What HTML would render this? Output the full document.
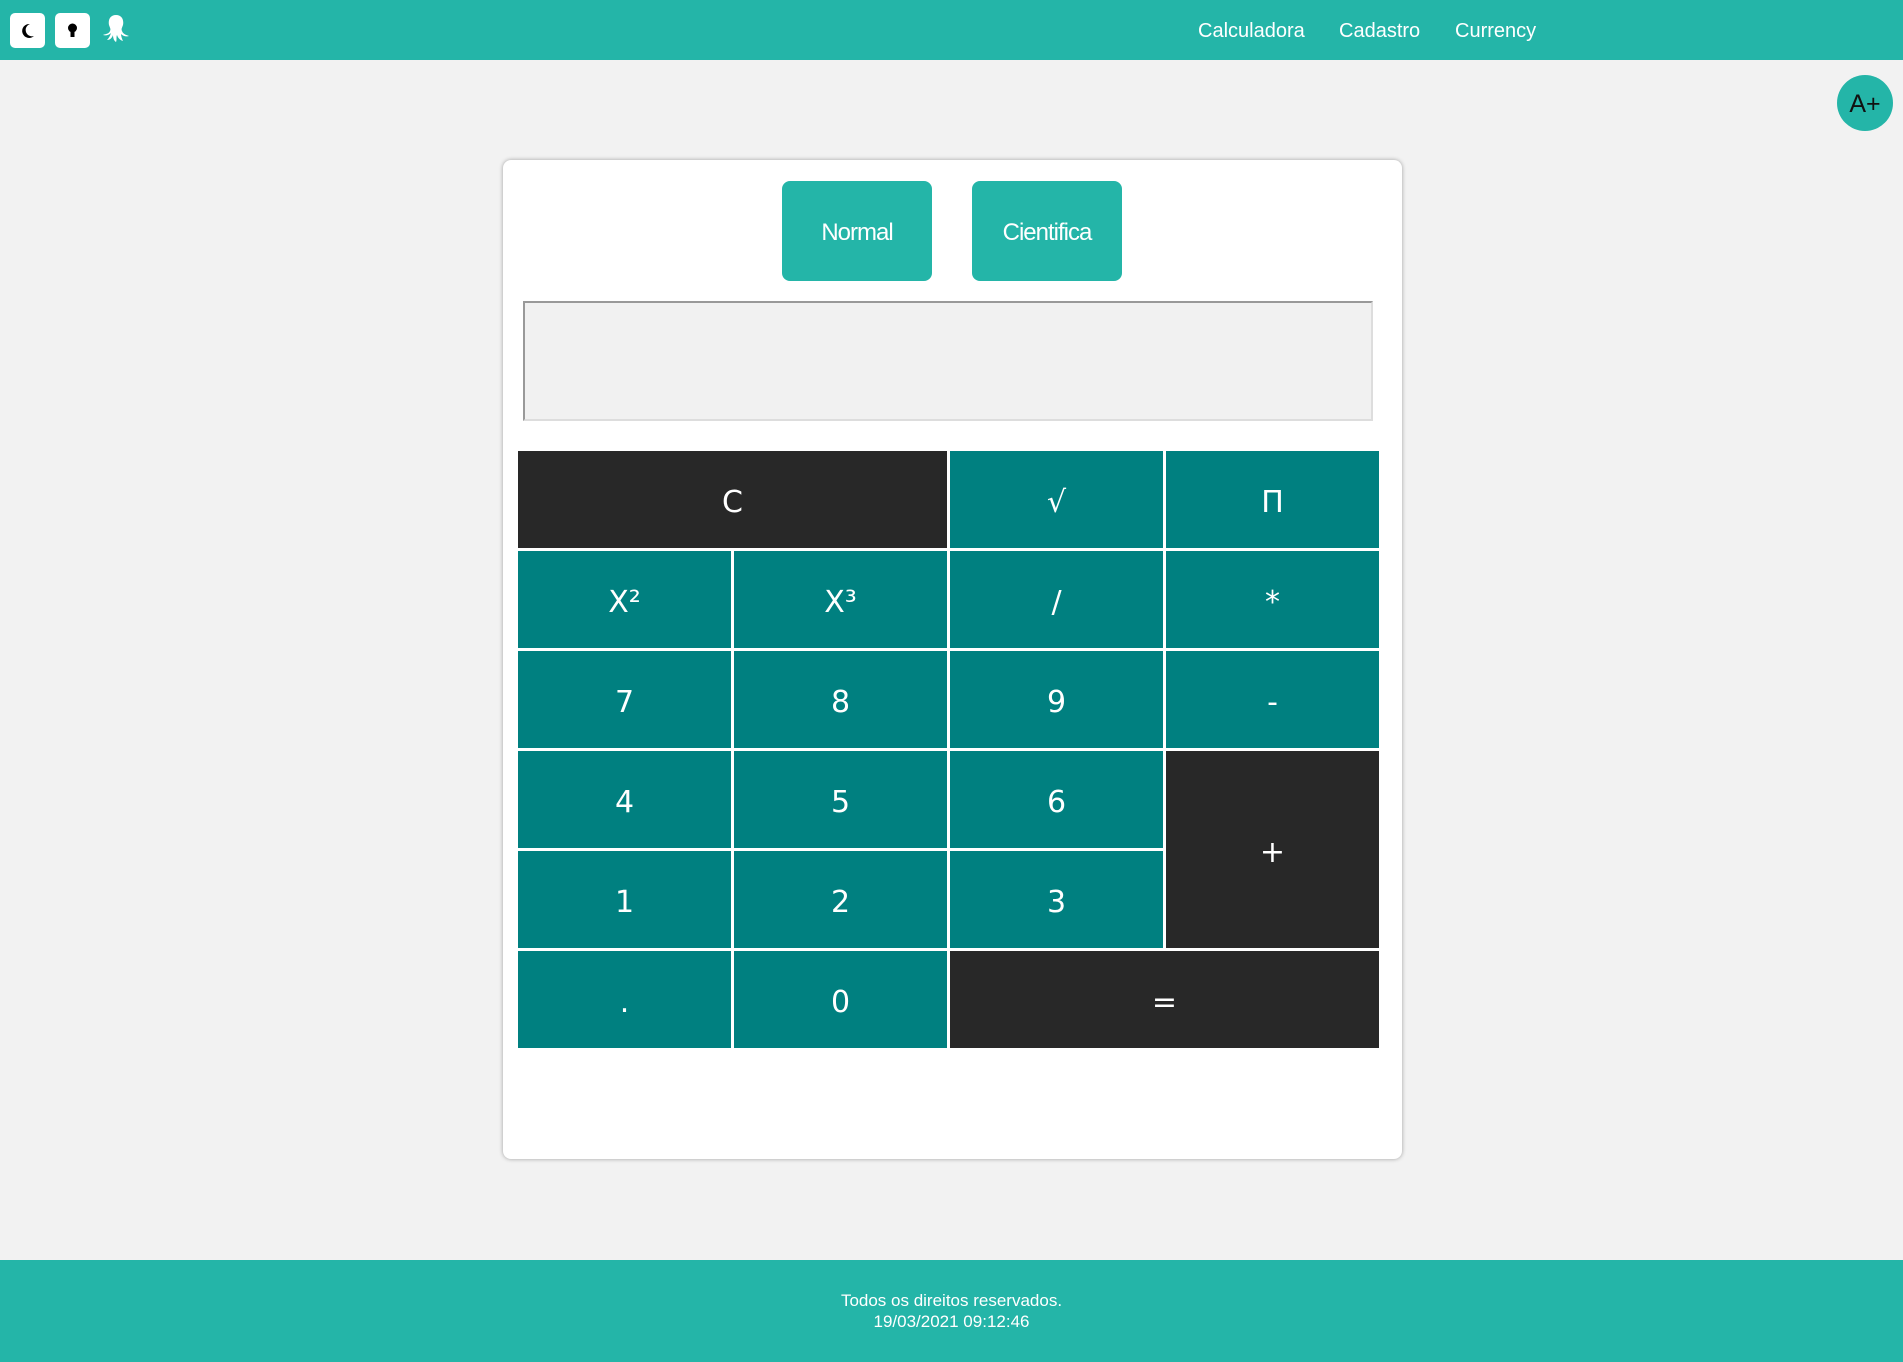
<!DOCTYPE html>
<html><head><meta charset="utf-8"><style>
*{box-sizing:border-box;margin:0;padding:0}
body{width:1903px;height:1362px;background:#f2f2f2;font-family:"Liberation Sans",sans-serif;position:relative;overflow:hidden}
.hdr{position:absolute;left:0;top:0;width:1903px;height:60px;background:#24b5a8}
.ib{position:absolute;top:13px;width:35px;height:35px;background:#fff;border-radius:5px}
.nav{position:absolute;top:20px;color:#fff;font-size:20px}
.ap{position:absolute;left:1837px;top:75px;width:56px;height:56px;border-radius:50%;background:#24b5a8;color:#111;font-size:25px;text-align:center;line-height:58px}
.card{position:absolute;left:503px;top:160px;width:899px;height:999px;background:#fff;border-radius:8px;box-shadow:0 0 4px rgba(0,0,0,.35)}
.tb{position:absolute;top:181px;width:150px;height:100px;background:#24b5a8;border-radius:8px;color:#fff;font-size:24px;text-align:center;line-height:103px;letter-spacing:-1px}
.disp{position:absolute;left:523px;top:301px;width:850px;height:120px;background:#f1f1f1;border:2px solid #999;border-right-color:#ddd;border-bottom-color:#ddd}
.k{position:absolute;width:213px;height:97px;background:#008080;color:#fff;font-family:"DejaVu Sans",sans-serif;font-size:30px;display:flex;align-items:center;justify-content:center;padding-top:5px}
.d{background:#282828}
.ft{position:absolute;left:0;top:1260px;width:1903px;height:102px;background:#24b5a8;color:#fff;text-align:center;font-size:17px;line-height:21px;padding-top:30px}
</style></head><body>
<div class="hdr">
<div class="ib" style="left:10px"><svg width="35" height="35"><path d="M20 11a7 7 0 1 0 4 12a6 6 0 0 1-4-12z" fill="#000"/></svg></div>
<div class="ib" style="left:55px"><svg width="35" height="35"><circle cx="17.5" cy="15" r="4.5" fill="#000"/><rect x="15.5" y="18" width="4" height="6" fill="#000"/></svg></div>
<svg style="position:absolute;left:100px;top:13px" width="32" height="32"><path d="M16 2c-6 0-8 5-7 10 1 3 2 4 1 6-1 3-5 3-7 4 3 1 6 0 8-2-1 3-2 5-4 7 3 0 5-2 6-5 0 3 1 6 3 7 1-2 0-5 1-7 1 3 3 5 6 6-1-2-2-5-2-7 2 2 5 3 8 2-3-1-6-2-7-5-1-2 0-3 1-6 1-5-1-10-7-10z" fill="#fff"/></svg>
<div class="nav" style="left:1198px">Calculadora</div>
<div class="nav" style="left:1339px">Cadastro</div>
<div class="nav" style="left:1455px">Currency</div>
</div>
<div class="ap">A+</div>
<div class="card"></div>
<div class="tb" style="left:782px">Normal</div>
<div class="tb" style="left:972px">Cientifica</div>
<div class="disp"></div>
<div class="k d" style="left:518px;top:451px;width:429px">C</div>
<div class="k" style="left:950px;top:451px">√</div>
<div class="k" style="left:1166px;top:451px">Π</div>
<div class="k" style="left:518px;top:551px">X²</div>
<div class="k" style="left:734px;top:551px">X³</div>
<div class="k" style="left:950px;top:551px">/</div>
<div class="k" style="left:1166px;top:551px">*</div>
<div class="k" style="left:518px;top:651px">7</div>
<div class="k" style="left:734px;top:651px">8</div>
<div class="k" style="left:950px;top:651px">9</div>
<div class="k" style="left:1166px;top:651px">-</div>
<div class="k" style="left:518px;top:751px">4</div>
<div class="k" style="left:734px;top:751px">5</div>
<div class="k" style="left:950px;top:751px">6</div>
<div class="k d" style="left:1166px;top:751px;height:197px">+</div>
<div class="k" style="left:518px;top:851px">1</div>
<div class="k" style="left:734px;top:851px">2</div>
<div class="k" style="left:950px;top:851px">3</div>
<div class="k" style="left:518px;top:951px">.</div>
<div class="k" style="left:734px;top:951px">0</div>
<div class="k d" style="left:950px;top:951px;width:429px">=</div>
<div class="ft">Todos os direitos reservados.<br>19/03/2021 09:12:46</div>
</body></html>
